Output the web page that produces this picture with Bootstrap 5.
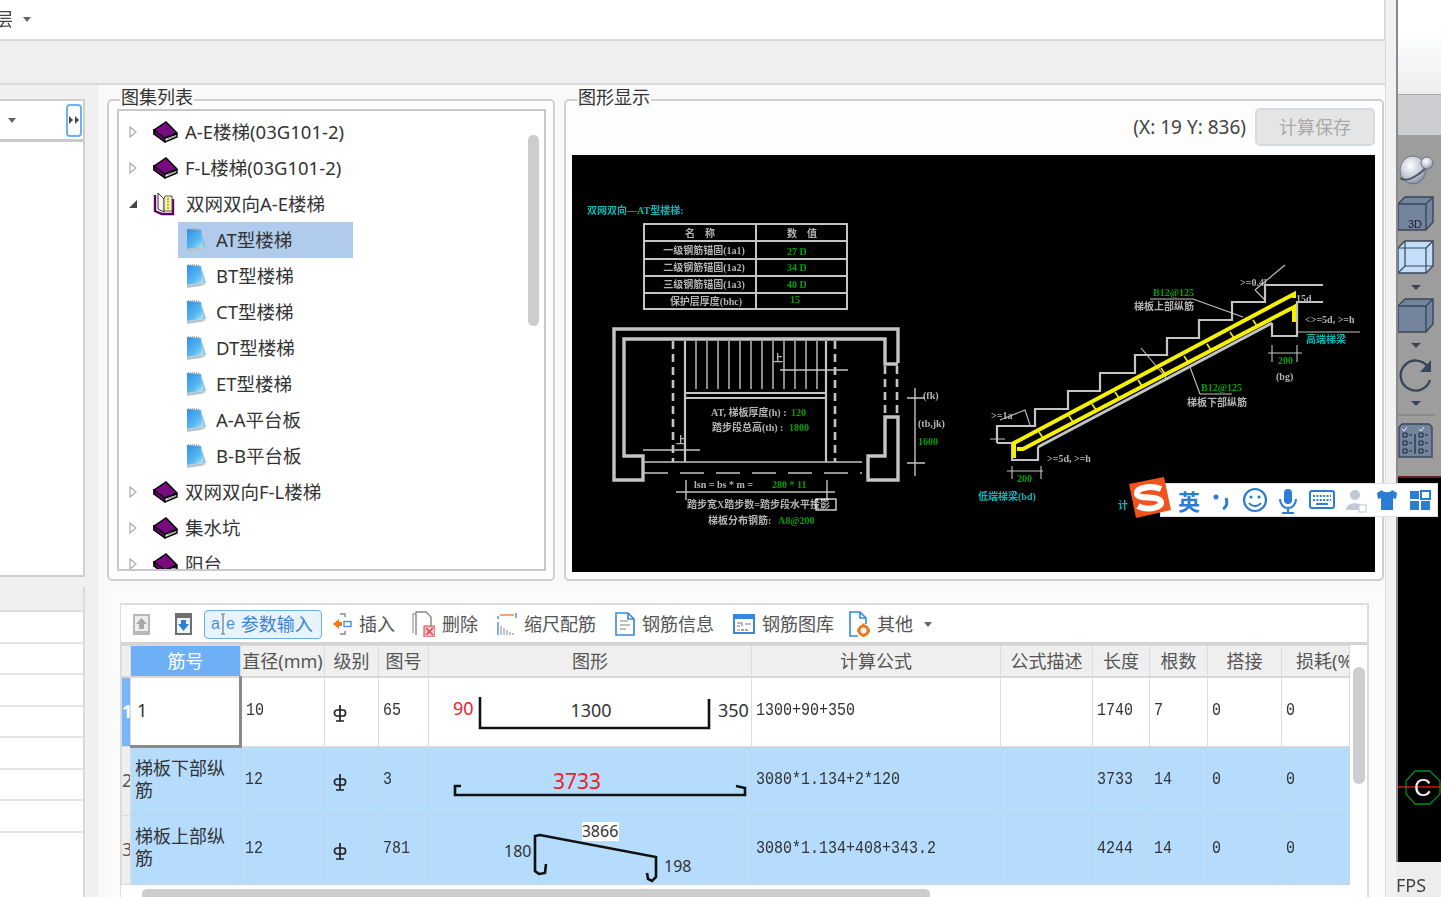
<!DOCTYPE html>
<html lang="zh-CN">
<head>
  <meta charset="UTF-8"/>
  <meta name="viewport" content="width=device-width,initial-scale=1.0"/>
  <title>图集列表</title>
  <link href="https://cdn.jsdelivr.net/npm/bootstrap@5.3.0/dist/css/bootstrap.min.css" rel="stylesheet">
  <style>
    html, body { margin:0; width:1441px; height:897px; overflow:hidden; background:#f0f0f0; }
    body { font-family:"Noto Sans","Noto Sans CJK SC",sans-serif; font-size:18px; color:#444; line-height:1.2; }
    .app-shell { width:1441px; height:897px; position:relative; filter:blur(.45px); }

    .main-col { width:1385px; height:897px; }
    .edge-strip { width:11px; height:897px; background:#f1f1f1; border-left:1px solid #d9d9d9; }
    .side-col { width:45px; height:897px; border-left:2px solid #8a8a8a; }
    .side-top { height:95px; background:linear-gradient(#fff 30%,#eceef0); border-bottom:1px solid #aaa; }
    .side-band { height:40px; background:#cbcdd0; }
    .side-tools { height:343px; background:#9d9d9d; border-bottom:2px solid #6b1c1c; }
    .side-tools svg, .side-cad svg { display:block; }
    .side-cad { height:384px; background:#000; }
    .side-fps { height:35px; background:#ededed; font-size:18px; line-height:46px; color:#444; overflow:hidden; white-space:nowrap; margin-left:-2px; }

    .top-bar { height:41px; background:#fff; border-bottom:2px solid #d9d9d9; border-right:1px solid #d9d9d9; gap:10px; }
    .top-bar span { margin-left:-5px; }
    .grey-band { height:44px; background:#efefef; border-bottom:2px solid #d9d9d9; }
    .caret-down { width:0; height:0; border-left:4px solid transparent; border-right:4px solid transparent; border-top:5px solid #666; }
    .work-row { height:812px; }

    .left-col { width:85px; height:812px; }
    .left-gap { height:14px; }
    .left-panel { height:478px; background:#fff; border:solid #cfcfcf; border-width:2px 2px 2px 0; }
    .left-head { height:41px; border-bottom:3px solid #c9c9c9; padding:0 1px 0 8px; }
    .expand-btn { width:16px; height:33px; border:2px solid #6fb0f2; border-radius:4px; background:#fff; padding:0; }
    .left-sep { height:10px; }
    .left-list { height:310px; background:#fff; border-right:2px solid #dadada; }
    .left-list-head { height:25px; background:#efefef; border-bottom:2px solid #ddd; }
    .left-list-row { height:31.5px; border-bottom:2px solid #e4e4e4; }

    .gutter { width:21px; height:812px; background:linear-gradient(90deg,#f0f0f0 13px,#f9f9f9 13px); }
    .right-col { width:1279px; height:812px; }
    .upper-row { height:504px; padding:14px 1px 8px 1px; gap:9px; background:#f9f9f9; }
    .group-box { border:2px solid #cfcfcf; border-radius:5px; background:#fdfdfd; height:482px; }
    .group-title { font-size:18px; line-height:22px; color:#333; background:#f9f9f9; margin:-15px 0 0 11px; padding:0 1px; width:max-content; }
    .tree-group { width:448px; }
    .tree-box { width:429px; height:462px; margin:1px 0 0 8px; border:2px solid #c8c8c8; background:#fff; position:relative; padding-top:3px; overflow:hidden; font-size:18.5px; }
    .tree-row { height:36px; color:#333; white-space:nowrap; }
    .tree-top { padding-left:10px; }
    .tree-child { margin-left:59px; width:175px; padding-left:8px; }
    .tree-child span { margin-left:10px; }
    .tree-top span { margin-left:7px; }
    .tree-on { background:#b0cbeb; }
    .tree-exp { width:8px; margin-right:16px; }
    .tree-scroll { position:absolute; left:409px; top:24px; width:11px; height:191px; background:#cdcdcd; border-radius:5px; }
    .preview-group { width:820px; }
    .preview-head { height:42px; margin-top:-2px; padding-right:7px; gap:9px; }
    .coord-text { font-size:19px; color:#444; }
    .calc-btn { width:120px; height:38px; font-size:18px; padding:0; border-width:2px; border-radius:5px; --bs-btn-disabled-bg:#e5e5e5; --bs-btn-disabled-border-color:#d6dbe0; --bs-btn-disabled-color:#a9a9a9; --bs-btn-disabled-opacity:1; }
    .cad-view { width:803px; height:417px; margin:7px 0 0 6px; display:block; background:#000; filter:blur(.25px); }
    .cad-view text { font-family:"Liberation Serif","Noto Sans CJK SC",serif; font-size:10px; font-weight:700; fill:#b4b4b4; }
    .cad-view .cad-g { fill:#00a000; }
    .cad-view .cad-c { fill:#00b8b8; }
    .cad-line { fill:none; stroke:#c4c4c4; }

    .bottom-panel { height:308px; padding:14px 16px 0 14px; background:#fbfbfb; }
    .rebar-box { height:294px; border:solid #dcdcdc; border-width:2px 2px 0 1px; background:#fff; position:relative; width:1249px; }
    .rebar-tools { height:40px; border-bottom:3px solid #d3d3d3; padding:1px 0 0 11px; }
    .tb-btn { height:29px; padding:0; border:1px solid transparent; border-radius:4px; font-size:18px; color:#555; gap:7px; --bs-btn-hover-border-color:transparent; white-space:nowrap; }
    .tb-icon-only { margin-right:23px; }
    .tb-down { margin-right:11px; }
    .tb-on { width:118px; background:#e9f3fe; border-color:#6eaaf0; color:#3a83d8; margin-right:10px; padding-left:6px; gap:6px; }
    .tb-gap { margin-right:17px; }
    .tb-gap-s { margin-right:15px; }
    .tb-gap-xs { margin-right:13px; }
    .ae-mark { font-family:"Liberation Sans",sans-serif; font-size:16px; color:#4d8fdc; white-space:nowrap; }

    .rebar-table { table-layout:fixed; width:1228px; margin:0; border-color:#dcdcdc; color:#333; }
    .rebar-table>:not(caption)>*>* { padding:0 0 0 4px; background-color:transparent; box-shadow:none; border:1px solid #dcdcdc; vertical-align:middle; overflow:hidden; }
    .rebar-table thead th { height:31px; background:#efefef; text-align:center; font-weight:400; font-size:18px; color:#555; padding:2px 0 0 0; white-space:nowrap; border-bottom:2px solid #d8d8d8; }
    .rebar-table thead th.col-key { background:#6db0f5; color:#fff; }
    .rebar-table thead th.col-clip { text-align:left; padding-left:14px; }
    .rebar-table tbody td, .rebar-table tbody th { height:69px; }
    .rebar-table tbody tr.row-cur td, .rebar-table tbody tr.row-cur th { height:68px; }
    .rebar-table tbody th { background:#efefef; font-weight:400; padding:0; text-align:center; font-size:18px; color:#555; }
    .rebar-table tbody tr.row-on td { background:#b5dcfd; border-color:#c3d6e6; }
    .rebar-table tbody tr.row-cur th { background:#79b6f8; color:#fff; font-weight:700; }
    .rebar-table tbody td.cell-cur { border:solid #8a8a8a; border-width:1px 3px 3px 1px; border-top-color:#dcdcdc; padding-left:6px; }
    .rebar-table tbody td.cell-shape { padding:0; }
    .rebar-table tbody td.cell-shape svg { display:block; }
    .cell-shape text { font-family:"Noto Sans",sans-serif; font-size:18px; fill:#333; }
    .cell-shape .shape-red { fill:#f01c28; }
    .cell-shape .shape-big { font-size:21px; }
    .cell-shape .shape-sm { font-size:16px; }
    .rebar-table tbody td.cell-name { line-height:22px; font-size:18px; padding-bottom:5px; }
    .num-text { font-family:"Liberation Mono",monospace; font-size:15px; display:inline-block; transform:scaleY(1.28); color:#333; margin-bottom:7px; }
    .rebar-vscroll { position:absolute; left:1232px; top:62px; width:12px; height:117px; background:#cdcdcd; border-radius:6px; }
    .rebar-hscroll { width:788px; height:14px; margin:4px 0 0 21px; background:#cdcdcd; border-radius:5px; }

    .ime-bar { position:absolute; left:1160px; top:483px; width:278px; height:34px; background:#fff; border:1px solid #e2e2e2; padding-left:17px; }
    .ime-s { position:absolute; left:1128px; top:476px; }
    .ime-word { font-family:"Noto Sans CJK SC",sans-serif; font-size:22px; font-weight:700; color:#2b7cd3; }
  </style>
</head>
<body>
<svg width="0" height="0" class="position-absolute">
  <defs>
    <symbol id="ico-book" viewBox="0 0 25 22">
      <path d="M1 13 L12 21 L24 16 V13 L12 17 L1 9 Z" fill="#fff" stroke="#000" stroke-width="1.4"/>
      <path d="M1 9 L13 1 L24 12 L12 17 Z" fill="#7a0a80" stroke="#000" stroke-width="1.4"/>
      <path d="M1 9 L12 17 V21 L1 13 Z" fill="#6a0070" stroke="#000" stroke-width="1.2"/>
      <path d="M14 18 L23 15" stroke="#888" stroke-width="1"/>
    </symbol>
    <symbol id="ico-open" viewBox="0 0 22 24">
      <path d="M2 3 V19 L9 22 L20 22 V7" fill="#fff" stroke="#5d0060" stroke-width="2.4"/>
      <path d="M5 1 L5 17 L11 20 V7 Z" fill="#f4f4f4" stroke="#333" stroke-width="1"/>
      <path d="M11 7 L12 4 H19 V19 H11 Z" fill="#f7f2b4" stroke="#555" stroke-width="1"/>
      <path d="M15 6 V17" stroke="#c8b820" stroke-width="2" stroke-dasharray="2 1"/>
    </symbol>
    <linearGradient id="page-grad" x1="0" y1="0" x2="0.8" y2="1">
      <stop offset="0" stop-color="#2a8fe4"/><stop offset=".7" stop-color="#5cbaf0"/><stop offset="1" stop-color="#a8e0f4"/>
    </linearGradient>
    <symbol id="ico-page" viewBox="0 0 20 24">
      <path d="M1 21 L17 19 L15 2 L1 1 Z" fill="url(#page-grad)"/>
      <path d="M1 21 L1 24 L15 22 L20 20 L17 19 Z" fill="#b8c4cc"/>
      <path d="M15 2 L20 19 L17 19 Z" fill="#8fc4e6"/>
      <path d="M2 1 H14" stroke="#9a9a9a" stroke-width="1.4" stroke-dasharray="1 1"/>
    </symbol>
    <symbol id="ico-gb" viewBox="0 0 14 18">
      <path d="M7 1 V17 M3 17 H11" stroke="#222" stroke-width="1.7" fill="none"/>
      <rect x="1.5" y="6" width="11" height="6" rx="2.5" fill="none" stroke="#222" stroke-width="1.7"/>
    </symbol>
  </defs>
</svg>

<div class="app-shell d-flex">
  <div class="main-col d-flex flex-column">
    <div class="top-bar d-flex align-items-center"><span>层</span><i class="caret-down"></i></div>
    <div class="grey-band"></div>

    <div class="work-row d-flex">
      <div class="left-col d-flex flex-column">
        <div class="left-gap"></div>
        <div class="left-panel">
          <div class="left-head d-flex align-items-center justify-content-between">
            <i class="caret-down"></i>
            <button class="expand-btn d-flex align-items-center justify-content-center" type="button">
              <svg width="12" height="10" viewBox="0 0 12 10"><path d="M1 1 L5 5 L1 9 Z M7 1 L11 5 L7 9 Z" fill="#444"/></svg>
            </button>
          </div>
        </div>
        <div class="left-sep"></div>
        <div class="left-list">
          <div class="left-list-head"></div>
          <div class="left-list-row"></div>
          <div class="left-list-row"></div>
          <div class="left-list-row"></div>
          <div class="left-list-row"></div>
          <div class="left-list-row"></div>
          <div class="left-list-row"></div>
          <div class="left-list-row"></div>
        </div>
      </div>
      <div class="gutter"></div>

      <div class="right-col d-flex flex-column">
        <div class="upper-row d-flex">
          <div class="group-box tree-group">
            <div class="group-title">图集列表</div>
            <div class="tree-box">
              <div class="tree-row tree-top d-flex align-items-center">
                <svg class="tree-exp" height="12" viewBox="0 0 8 12"><path d="M1 1 L7 6 L1 11 Z" fill="#fff" stroke="#aaa" stroke-width="1.2"/></svg>
                <svg width="25" height="22"><use href="#ico-book"/></svg><span>A-E楼梯(03G101-2)</span>
              </div>
              <div class="tree-row tree-top d-flex align-items-center">
                <svg class="tree-exp" height="12" viewBox="0 0 8 12"><path d="M1 1 L7 6 L1 11 Z" fill="#fff" stroke="#aaa" stroke-width="1.2"/></svg>
                <svg width="25" height="22"><use href="#ico-book"/></svg><span>F-L楼梯(03G101-2)</span>
              </div>
              <div class="tree-row tree-top d-flex align-items-center">
                <svg class="tree-exp" height="12" viewBox="0 0 8 12"><path d="M0 10 L8 2 V10 Z" fill="#444"/></svg>
                <svg width="22" height="24" class="me-1"><use href="#ico-open"/></svg><span>双网双向A-E楼梯</span>
              </div>
              <div class="tree-row tree-child tree-on d-flex align-items-center"><svg width="20" height="24"><use href="#ico-page"/></svg><span>AT型楼梯</span></div>
              <div class="tree-row tree-child d-flex align-items-center"><svg width="20" height="24"><use href="#ico-page"/></svg><span>BT型楼梯</span></div>
              <div class="tree-row tree-child d-flex align-items-center"><svg width="20" height="24"><use href="#ico-page"/></svg><span>CT型楼梯</span></div>
              <div class="tree-row tree-child d-flex align-items-center"><svg width="20" height="24"><use href="#ico-page"/></svg><span>DT型楼梯</span></div>
              <div class="tree-row tree-child d-flex align-items-center"><svg width="20" height="24"><use href="#ico-page"/></svg><span>ET型楼梯</span></div>
              <div class="tree-row tree-child d-flex align-items-center"><svg width="20" height="24"><use href="#ico-page"/></svg><span>A-A平台板</span></div>
              <div class="tree-row tree-child d-flex align-items-center"><svg width="20" height="24"><use href="#ico-page"/></svg><span>B-B平台板</span></div>
              <div class="tree-row tree-top d-flex align-items-center">
                <svg class="tree-exp" height="12" viewBox="0 0 8 12"><path d="M1 1 L7 6 L1 11 Z" fill="#fff" stroke="#aaa" stroke-width="1.2"/></svg>
                <svg width="25" height="22"><use href="#ico-book"/></svg><span>双网双向F-L楼梯</span>
              </div>
              <div class="tree-row tree-top d-flex align-items-center">
                <svg class="tree-exp" height="12" viewBox="0 0 8 12"><path d="M1 1 L7 6 L1 11 Z" fill="#fff" stroke="#aaa" stroke-width="1.2"/></svg>
                <svg width="25" height="22"><use href="#ico-book"/></svg><span>集水坑</span>
              </div>
              <div class="tree-row tree-top d-flex align-items-center">
                <svg class="tree-exp" height="12" viewBox="0 0 8 12"><path d="M1 1 L7 6 L1 11 Z" fill="#fff" stroke="#aaa" stroke-width="1.2"/></svg>
                <svg width="25" height="22"><use href="#ico-book"/></svg><span>阳台</span>
              </div>
              <div class="tree-scroll"></div>
            </div>
          </div>

          <div class="group-box preview-group">
            <div class="group-title">图形显示</div>
            <div class="preview-head d-flex align-items-center justify-content-end">
              <span class="coord-text">(X: 19 Y: 836)</span>
              <button class="btn calc-btn" type="button" disabled>计算保存</button>
            </div>

            <svg class="cad-view" viewBox="572 155 803 417">
              <!-- plan: title and anchorage table -->
              <text x="587" y="214" class="cad-c">双网双向—AT型楼梯:</text>
              <path class="cad-line" stroke-width="2" d="M644 224 H847 V309 H644 Z M644 241 H847 M644 259 H847 M644 276 H847 M644 293 H847 M756 224 V309"/>
              <text x="700" y="237" text-anchor="middle">名　称</text><text x="802" y="237" text-anchor="middle">数　值</text>
              <text x="704" y="254" text-anchor="middle">一级钢筋锚固(1a1)</text><text x="787" y="255" class="cad-g">27 D</text>
              <text x="704" y="271" text-anchor="middle">二级钢筋锚固(1a2)</text><text x="787" y="271" class="cad-g">34 D</text>
              <text x="704" y="288" text-anchor="middle">三级钢筋锚固(1a3)</text><text x="787" y="288" class="cad-g">40 D</text>
              <text x="706" y="305" text-anchor="middle">保护层厚度(bhc)</text><text x="790" y="303" class="cad-g">15</text>
              <!-- plan: walls -->
              <path class="cad-line" stroke-width="3.4" d="M898 363 V329 H614 V480 H643 V456 H624 V339 H885 V364 H898"/>
              <path class="cad-line" stroke-width="3.4" d="M885 417 H898 V480 H868 V456 H885 Z"/>
              <path class="cad-line" stroke-width="2.6" stroke-dasharray="8 5" d="M885 366 V416 M897 366 V416 M673 341 V462 M835 341 V462"/>
              <path class="cad-line" stroke-width="1.4" d="M696 341 V389 M707 341 V389 M718 341 V389 M729 341 V389 M740 341 V389 M751 341 V389 M762 341 V389 M773 341 V389 M784 341 V389 M795 341 V389 M806 341 V389 M817 341 V389"/>
              <path class="cad-line" stroke-width="2.2" d="M685 341 V462 M826 341 V462 M685 393 H826 M685 398 H826"/>
              <path class="cad-line" stroke-width="1.4" d="M644 462 H862 M780 370 H848 M643 450 H700 M676 492 H835 M686 480 V500 M827 480 V500 M915 388 V476 M907 398 H925 M907 463 H925"/>
              <path class="cad-line" stroke-width="1.6" stroke-dasharray="24 12" d="M644 473 H862"/>
              <text x="773" y="362">上</text><text x="676" y="444">上</text>
              <text x="711" y="416">AT, 梯板厚度(h) :</text><text x="791" y="416" class="cad-g">120</text>
              <text x="712" y="431">踏步段总高(th) :</text><text x="789" y="431" class="cad-g">1800</text>
              <text x="923" y="399">(fk)</text><text x="918" y="427">(tb,jk)</text><text x="918" y="445" class="cad-g">1600</text>
              <text x="694" y="488">lsn = bs * m =</text><text x="772" y="488" class="cad-g">280 * 11</text>
              <text x="687" y="508">踏步宽X踏步数=踏步段水平投影</text>
              <rect x="816" y="499" width="20" height="11" fill="none" stroke="#fff" stroke-width="1.2"/>
              <text x="708" y="524">梯板分布钢筋:</text><text x="778" y="524" class="cad-g">A8@200</text>
              <!-- section: stair and rebar -->
              <path class="cad-line" stroke-width="2.2" d="M997 443 V426 H1035 V409 H1068 V391 H1100 V373 H1135 V355 H1167 V338 H1199 V320 H1232 V302 H1265 V285 H1323"/>
              <path class="cad-line" stroke-width="2.2" d="M1323 302 H1297 V336 H1272 V323 M997 443 H1012 V460 H1038 V447"/>
              <path class="cad-line" stroke-width="3" d="M1038 447 L1272 323"/>
              <path class="cad-line" stroke-width="1.1" d="M1193 299 L1243 317 M1150 299 H1193 M1297 332 H1360 M1268 353 H1302 M1272 345 V362 M1297 345 V362 M1190 367 L1200 394 H1232 M1007 471 H1043 M1012 466 V479 M1041 466 V479 M990 439 H1005 M1000 420 L1025 410 L1030 425 M1141 348 L1168 380 M1255 290 L1285 265 M1255 290 L1265 300"/>
              <path fill="none" stroke="#f4f000" stroke-width="4" d="M1014 458 V443 L1294 294 L1294 298 M1017 449 H1023 L1294 307 V322"/>
              <path fill="none" stroke="#f4f000" stroke-width="1.6" d="M1039 432 L1043 438 M1069 416 L1073 422 M1092 404 L1096 410 M1115 392 L1119 398 M1138 380 L1142 386 M1161 368 L1165 374 M1184 356 L1188 362 M1207 344 L1211 350 M1230 332 L1234 338 M1253 320 L1257 326"/>
              <text x="1153" y="296" class="cad-g">B12@125</text>
              <text x="1134" y="310">梯板上部纵筋</text>
              <text x="1240" y="286">&gt;=0.4l</text><text x="1296" y="302">15d</text>
              <text x="1305" y="323">&lt;&gt;=5d, &gt;=h</text>
              <text x="1306" y="343" class="cad-c">高端梯梁</text>
              <text x="1278" y="364" class="cad-g">200</text><text x="1276" y="380">(bg)</text>
              <text x="1201" y="391" class="cad-g">B12@125</text>
              <text x="1187" y="406">梯板下部纵筋</text>
              <text x="991" y="419">&gt;=1a</text><text x="1047" y="462">&gt;=5d, &gt;=h</text>
              <text x="1017" y="482" class="cad-g">200</text>
              <text x="978" y="500" class="cad-c">低端梯梁(bd)</text>
              <text x="1118" y="509" class="cad-c">计</text>
            </svg>
          </div>
        </div>

        <div class="bottom-panel">
          <div class="rebar-box">
            <div class="rebar-tools d-flex align-items-center">
              <button class="btn tb-btn tb-icon-only" type="button">
                <svg width="17" height="21" viewBox="0 0 17 21" class="d-block"><rect x="1" y="1" width="15" height="19" fill="#ededed" stroke="#b8b8b8" stroke-width="2"/><path d="M8.5 4 L14 10 H11 V15 H6 V10 H3 Z" fill="#a8a8a8"/><rect y="17" width="17" height="4" fill="#b8b8b8"/></svg>
              </button>
              <button class="btn tb-btn tb-down" type="button">
                <svg width="17" height="22" viewBox="0 0 17 22" class="d-block"><rect x="1" y="1" width="15" height="20" fill="#eef3fa" stroke="#6f6f6f" stroke-width="2"/><rect width="17" height="5" fill="#6f6f6f"/><path d="M8.5 18 L14 11 H11 V7 H6 V11 H3 Z" fill="#2f7fd6"/></svg>
              </button>
              <button class="btn tb-btn tb-on d-flex align-items-center" type="button">
                <span class="ae-mark d-flex align-items-center">a<svg width="6" height="24" viewBox="0 0 6 24"><path d="M1 2 H5 M3 2 V22 M1 22 H5" stroke="#777" stroke-width="1.2" fill="none"/></svg>e</span>参数输入
              </button>
              <button class="btn tb-btn tb-gap-s d-flex align-items-center" type="button">
                <svg width="19" height="24" viewBox="0 0 19 24"><path d="M7 2 H12 V5 M7 22 H12 V19" fill="none" stroke="#888" stroke-width="1.4"/><path d="M0 12 L6 7 V10 H9 V14 H6 V17 Z" fill="#f07818"/><rect x="11" y="9.5" width="7" height="5" fill="none" stroke="#4a90d8" stroke-width="1.4"/></svg>插入
              </button>
              <button class="btn tb-btn tb-gap d-flex align-items-center" type="button">
                <svg width="23" height="26" viewBox="0 0 23 26"><path d="M1 22 V3 H11" fill="none" stroke="#aaa" stroke-width="1.4"/><path d="M4 24 V1 H14 L19 6 V16" fill="#fff" stroke="#888" stroke-width="1.4"/><rect x="12" y="15" width="11" height="11" fill="#f4c8c8" stroke="#d8424a"/><path d="M14 17 L21 24 M21 17 L14 24" stroke="#d8424a" stroke-width="1.4"/></svg>删除
              </button>
              <button class="btn tb-btn tb-gap d-flex align-items-center" type="button">
                <svg width="20" height="24" viewBox="0 0 20 24"><path d="M1 4 V7 M19 1 V6 M1 10 V23" stroke="#4a90d8" stroke-width="1.4"/><path d="M3 3 H17" stroke="#f07818" stroke-width="1.3"/><path d="M4 14 V23 M7 16 V23 M10 18 V23 M13 20 V23 M16 21 V23" stroke="#999" stroke-width="1.2"/></svg>缩尺配筋
              </button>
              <button class="btn tb-btn tb-gap d-flex align-items-center" type="button">
                <svg width="20" height="24" viewBox="0 0 20 24"><path d="M1 1 H13 L19 7 V23 H1 Z M13 1 V7 H19" fill="#fff" stroke="#3a86d8" stroke-width="1.6"/><path d="M5 9 H13 M5 13 H15 M5 17 H11" stroke="#aaa" stroke-width="1.3"/></svg>钢筋信息
              </button>
              <button class="btn tb-btn tb-gap-xs d-flex align-items-center" type="button">
                <svg width="22" height="20" viewBox="0 0 22 20"><rect x="1" y="1" width="20" height="18" fill="#fff" stroke="#3a86d8" stroke-width="2"/><rect width="22" height="5" fill="#3a86d8"/><path d="M4 9 H9 V12 M12 10 H18 M4 12 H7" stroke="#777" stroke-width="1.1" fill="none"/><path d="M4 16 H7" stroke="#e2b030" stroke-width="1.5"/><path d="M8 16 H11" stroke="#e06060" stroke-width="1.5"/><path d="M12 16 H15" stroke="#60b060" stroke-width="1.5"/></svg>钢筋图库
              </button>
              <button class="btn tb-btn d-flex align-items-center" type="button">
                <svg width="21" height="26" viewBox="0 0 21 26"><path d="M9 25 H1 V1 H11 L17 7 V13 M11 1 V7 H17" fill="#fff" stroke="#3a86d8" stroke-width="1.6"/><circle cx="14.5" cy="19.5" r="4.5" fill="none" stroke="#f07818" stroke-width="3"/><path d="M14.5 12.5 V15 M14.5 24 V26 M8 19.5 H10 M19 19.5 H21" stroke="#f07818" stroke-width="2.4"/></svg>其他<i class="caret-down ms-1"></i>
              </button>
            </div>

            <table class="table table-bordered rebar-table">
              <colgroup>
                <col style="width:9px"><col style="width:110px"><col style="width:84px"><col style="width:54px"><col style="width:50px"><col style="width:323px"><col style="width:249px"><col style="width:92px"><col style="width:57px"><col style="width:58px"><col style="width:74px"><col style="width:68px">
              </colgroup>
              <thead>
                <tr>
                  <th></th><th class="col-key">筋号</th><th>直径(mm)</th><th>级别</th><th>图号</th><th>图形</th><th>计算公式</th><th>公式描述</th><th>长度</th><th>根数</th><th>搭接</th><th class="col-clip">损耗(%)</th>
                </tr>
              </thead>
              <tbody>
                <tr class="row-cur">
                  <th>1</th>
                  <td class="cell-cur">1</td>
                  <td><span class="num-text">10</span></td>
                  <td class="ps-2"><svg width="14" height="18"><use href="#ico-gb"/></svg></td>
                  <td><span class="num-text">65</span></td>
                  <td class="cell-shape">
                    <svg width="323" height="68" viewBox="428 677 323 68">
                      <path d="M479 696 V727 H708 V698" fill="none" stroke="#111" stroke-width="2.6"/>
                      <text x="452" y="714" class="shape-red">90</text>
                      <text x="590" y="716" text-anchor="middle">1300</text>
                      <text x="717" y="716">350</text>
                    </svg>
                  </td>
                  <td><span class="num-text">1300+90+350</span></td>
                  <td></td>
                  <td><span class="num-text">1740</span></td>
                  <td><span class="num-text">7</span></td>
                  <td><span class="num-text">0</span></td>
                  <td><span class="num-text">0</span></td>
                </tr>
                <tr class="row-on">
                  <th>2</th>
                  <td class="cell-name">梯板下部纵筋</td>
                  <td><span class="num-text">12</span></td>
                  <td class="ps-2"><svg width="14" height="18"><use href="#ico-gb"/></svg></td>
                  <td><span class="num-text">3</span></td>
                  <td class="cell-shape">
                    <svg width="323" height="68" viewBox="428 746 323 68">
                      <path d="M460 785 H454 V794 H744 V787 L735 785" fill="none" stroke="#111" stroke-width="2.6"/>
                      <text x="576" y="788" text-anchor="middle" class="shape-red shape-big">3733</text>
                    </svg>
                  </td>
                  <td><span class="num-text">3080*1.134+2*120</span></td>
                  <td></td>
                  <td><span class="num-text">3733</span></td>
                  <td><span class="num-text">14</span></td>
                  <td><span class="num-text">0</span></td>
                  <td><span class="num-text">0</span></td>
                </tr>
                <tr class="row-on">
                  <th>3</th>
                  <td class="cell-name">梯板上部纵筋</td>
                  <td><span class="num-text">12</span></td>
                  <td class="ps-2"><svg width="14" height="18"><use href="#ico-gb"/></svg></td>
                  <td><span class="num-text">781</span></td>
                  <td class="cell-shape">
                    <svg width="323" height="68" viewBox="428 815 323 68">
                      <rect x="581" y="821" width="37" height="19" fill="#fff"/>
                      <path d="M545 863 L544 872 L538 873 L534 870 V835 L539 834 L655 856 V876 L651 880 L647 878 L646 872" fill="none" stroke="#111" stroke-width="2.6"/>
                      <text x="599" y="836" text-anchor="middle" class="shape-sm">3866</text>
                      <text x="503" y="856" class="shape-sm">180</text>
                      <text x="663" y="871" class="shape-sm">198</text>
                    </svg>
                  </td>
                  <td><span class="num-text">3080*1.134+408+343.2</span></td>
                  <td></td>
                  <td><span class="num-text">4244</span></td>
                  <td><span class="num-text">14</span></td>
                  <td><span class="num-text">0</span></td>
                  <td><span class="num-text">0</span></td>
                </tr>
              </tbody>
            </table>
            <div class="rebar-hscroll"></div>
            <div class="rebar-vscroll"></div>
          </div>
        </div>
      </div>
    </div>
  </div>

  <div class="edge-strip"></div>

  <div class="side-col">
    <div class="side-top"></div>
    <div class="side-band"></div>
    <div class="side-tools">
      <svg width="43" height="343" viewBox="1398 135 43 343">
        <defs>
          <radialGradient id="ball" cx=".4" cy=".35" r=".8"><stop offset="0" stop-color="#fff"/><stop offset=".55" stop-color="#c0c5d2"/><stop offset="1" stop-color="#5d667a"/></radialGradient>
        </defs>
        <ellipse cx="1413" cy="170" rx="13" ry="14" fill="url(#ball)" stroke="#6d7688"/>
        <path d="M1400 178 C1408 184 1424 172 1430 162" fill="none" stroke="#4d5668" stroke-width="2"/>
        <circle cx="1427" cy="163" r="6" fill="url(#ball)" stroke="#6d7688"/>
        <!-- 3D cube -->
        <path d="M1398 204 L1405 197 H1433 V222 L1426 230 H1398 Z" fill="#74849c" stroke="#38465a" stroke-width="1.4"/>
        <path d="M1398 204 H1426 V230 M1426 204 L1433 197" fill="none" stroke="#38465a" stroke-width="1.4"/>
        <text x="1408" y="228" font-size="11" fill="#223" font-family="Liberation Sans">3D</text>
        <!-- wire cube -->
        <path d="M1398 248 L1405 241 H1433 V266 L1426 273 H1398 Z" fill="#c4ddf8" stroke="#38465a" stroke-width="1.4"/>
        <path d="M1398 248 H1426 V273 M1426 248 L1433 241 M1405 241 V266 H1433 M1405 266 L1398 273" fill="none" stroke="#38465a" stroke-width="1.2"/>
        <path d="M1411 285 H1421 L1416 290 Z" fill="#3a4658"/>
        <!-- solid cube -->
        <path d="M1398 306 L1405 299 H1433 V324 L1426 332 H1398 Z" fill="#74849c" stroke="#38465a" stroke-width="1.4"/>
        <path d="M1398 306 H1426 V332 M1426 306 L1433 299" fill="none" stroke="#38465a" stroke-width="1.4"/>
        <path d="M1411 343 H1421 L1416 348 Z" fill="#3a4658"/>
        <!-- rotate -->
        <path d="M1428 367 A15 15 0 1 0 1430 380" fill="none" stroke="#38465a" stroke-width="2.4"/>
        <path d="M1431 360 V372 H1420 Z" fill="#38465a"/>
        <path d="M1411 401 H1421 L1416 406 Z" fill="#3a4658"/>
        <path d="M1398 415 H1435" stroke="#77797c" stroke-width="1.2"/>
        <!-- checklist -->
        <path d="M1399 427 L1402 424 H1429 L1432 427 V457 H1399 Z" fill="#74849c" stroke="#38465a" stroke-width="1.4"/>
        <path d="M1415 434 V454" stroke="#1f2a38" stroke-width="1.2"/>
        <path d="M1402 429 L1404 431 L1407 427 M1419 429 L1421 431 L1424 427" fill="none" stroke="#e6eaf0" stroke-width="1"/>
        <path d="M1403 433 H1407 V437 H1403 Z M1403 441 H1407 V445 H1403 Z M1403 449 H1407 V453 H1403 Z M1419 433 H1423 V437 H1419 Z M1419 441 H1423 V445 H1419 Z M1419 449 H1423 V453 H1419 Z M1409 435 H1412 M1409 443 H1412 M1409 451 H1412 M1425 435 H1428 M1425 443 H1428 M1425 451 H1428" fill="none" stroke="#1f2a38" stroke-width="1"/>
      </svg>
    </div>
    <div class="side-cad">
      <svg width="43" height="384" viewBox="1398 478 43 384">
        <path d="M1398 787 H1441" stroke="#d81010" stroke-width="1.6"/>
        <path d="M1415 771 H1430 L1440 781 V794 L1430 804 H1415 L1406 794 V781 Z" fill="none" stroke="#0a8a14" stroke-width="1.3"/>
        <text x="1414" y="796" font-family="Liberation Sans" font-size="24" fill="#eee">C</text>
      </svg>
    </div>
    <div class="side-fps">FPS</div>
  </div>

  <!-- sogou input method bar floats over everything -->
  <div class="ime-bar d-flex align-items-center">
    <span class="ime-word">英</span>
    <svg width="237" height="28" viewBox="1200 486 237 28" class="flex-shrink-0">
      <circle cx="1216" cy="497" r="2.5" fill="#2b7cd3"/><path d="M1226 498 C1228 504 1226 507 1223 509" fill="none" stroke="#2b7cd3" stroke-width="3"/>
      <circle cx="1255" cy="500" r="11" fill="none" stroke="#2b7cd3" stroke-width="2.2"/><circle cx="1251" cy="497" r="1.6" fill="#2b7cd3"/><circle cx="1259" cy="497" r="1.6" fill="#2b7cd3"/><path d="M1249 503 C1252 507 1258 507 1261 503" fill="none" stroke="#2b7cd3" stroke-width="1.8"/>
      <rect x="1284" y="489" width="8" height="15" rx="4" fill="#2b7cd3"/><path d="M1280 499 C1280 511 1296 511 1296 499 M1288 508 V513 M1282 513 H1294" fill="none" stroke="#2b7cd3" stroke-width="2"/>
      <rect x="1310" y="491" width="24" height="17" rx="2" fill="none" stroke="#2b7cd3" stroke-width="2"/><path d="M1313 496 H1331 M1313 500 H1331" stroke="#2b7cd3" stroke-width="2" stroke-dasharray="2 1.4"/><path d="M1316 504 H1328" stroke="#2b7cd3" stroke-width="2"/>
      <circle cx="1355" cy="495" r="5" fill="#c2c9d2"/><path d="M1346 510 C1346 501 1364 501 1364 510 Z" fill="#c2c9d2"/><rect x="1359" y="505" width="7" height="7" fill="#fff" stroke="#c2c9d2"/>
      <path d="M1382 490 L1377 493 L1378 499 L1381 498 V510 H1393 V498 L1396 499 L1397 493 L1392 490 C1391 493 1383 493 1382 490 Z" fill="#2b7cd3"/>
      <rect x="1410" y="491" width="9" height="8" fill="#2b7cd3"/><rect x="1421" y="491" width="9" height="8" fill="none" stroke="#2b7cd3" stroke-width="2"/><rect x="1410" y="501" width="9" height="9" fill="#2b7cd3"/><rect x="1421" y="501" width="9" height="9" fill="#2b7cd3"/>
    </svg>
  </div>
  <svg class="ime-s" width="44" height="44" viewBox="0 0 44 44">
    <path d="M1 8 L36 1 L43 34 L8 42 Z" fill="#f0541e"/>
    <path d="M33 13 C22 9 8 12 9 18 C10 24 32 19 33 26 C34 32 18 35 10 30" fill="none" stroke="#fff" stroke-width="6"/>
  </svg>
</div>
</body>
</html>
